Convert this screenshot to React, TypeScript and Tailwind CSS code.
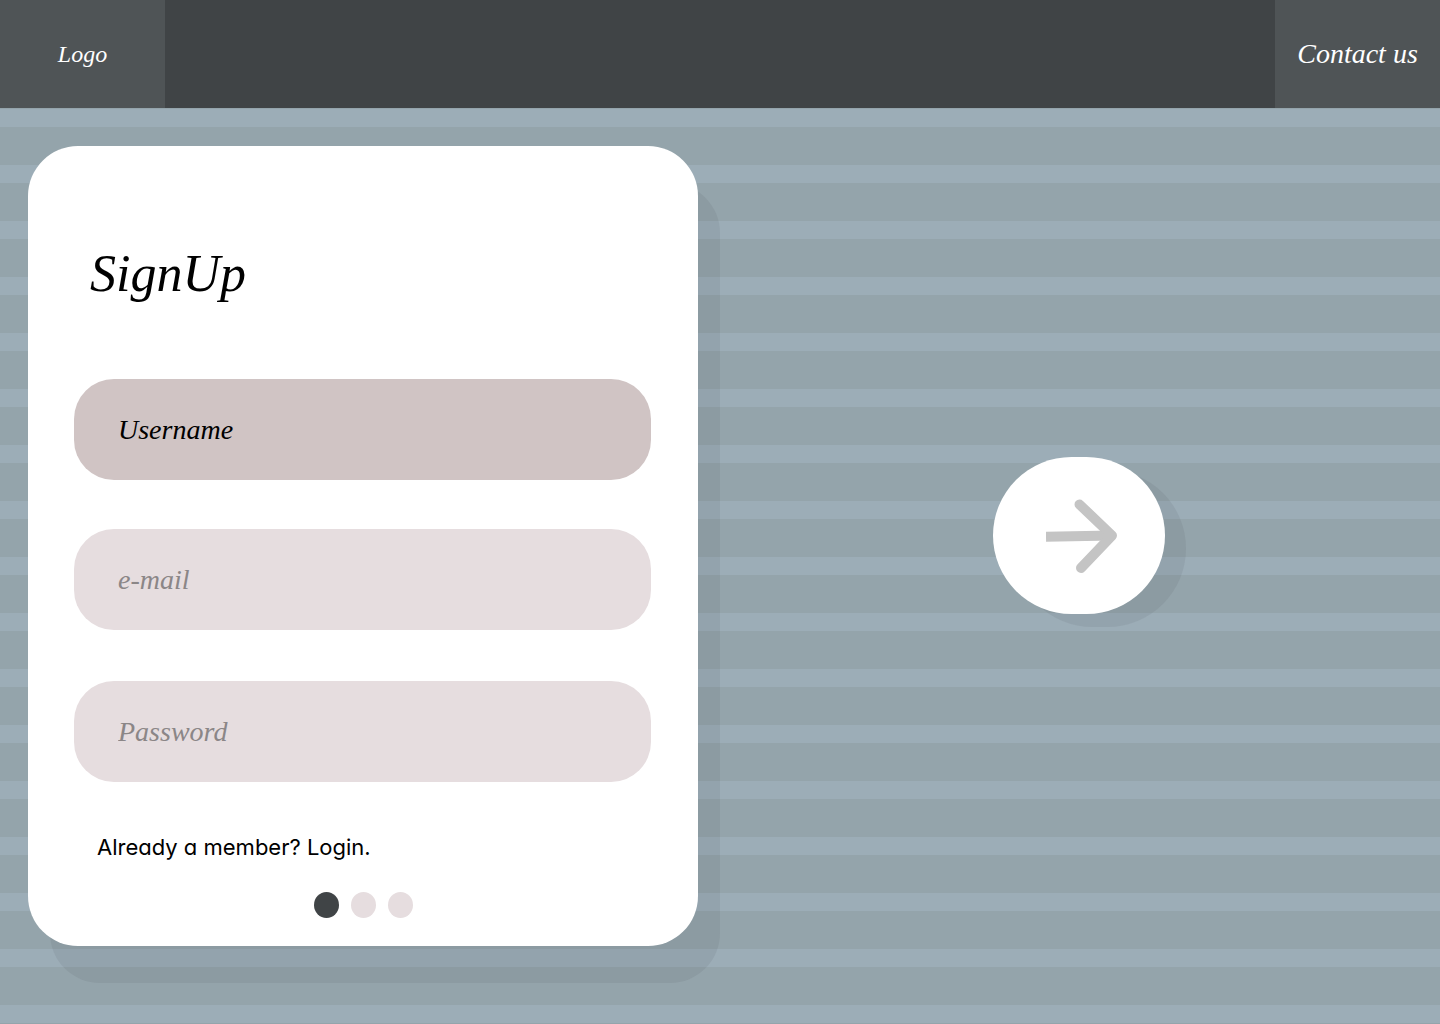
const stripes =
  "bg-[#9cadb7] bg-[repeating-linear-gradient(to_bottom,#9cadb7_0px,#9cadb7_18px,#94a4ab_18px,#94a4ab_56px)] bg-[position:0_1px]";

const script = "font-['Liberation_Serif',serif] italic";

type FieldProps = {
  label: string;
  type: string;
  look: string;
};

function Field({ label, type, look }: FieldProps) {
  return (
    <input
      type={type}
      aria-label={label}
      placeholder={label}
      className={`block h-[101px] w-full rounded-[40px] px-11 text-[28px] outline-none placeholder:opacity-100 ${script} ${look}`}
    />
  );
}

function Arrow() {
  return (
    <svg width="72" height="76" viewBox="0 0 72 76" fill="none" aria-hidden="true">
      <path d="M0 38.8L66 37.4" stroke="#c4c4c4" strokeWidth="10" />
      <path
        d="M33.5 6.5L66 37.5L35 70"
        stroke="#c4c4c4"
        strokeWidth="10"
        strokeLinecap="round"
        strokeLinejoin="round"
      />
    </svg>
  );
}

export default function App() {
  return (
    <div className="flex min-h-screen flex-col">
      <header className={`flex h-[108px] justify-between bg-[#404446] text-white ${script}`}>
        <a href="#home" className="flex w-[165px] items-center justify-center bg-[#4f5456] text-[24px]">
          Logo
        </a>
        <a href="#contact" className="flex w-[165px] items-center justify-center bg-[#4f5456] text-[28px]">
          Contact us
        </a>
      </header>

      <main className={`grid flex-1 grid-cols-2 items-start pt-[38px] pb-[78px] ${stripes}`}>
        <form className="mr-[22px] ml-7 rounded-[50px] bg-white pt-[92px] pr-[47px] pb-7 pl-[46px] shadow-[22px_37px_0_rgba(64,72,76,0.09)]">
          <h1 className={`pl-4 text-[52px] leading-[72px] text-black ${script}`}>SignUp</h1>

          <div className="mt-[69px] mb-[51px]">
            <Field label="Username" type="text" look="mb-[49px] bg-[#d0c4c4] text-black placeholder:text-black" />
            <Field label="e-mail" type="email" look="mb-[51px] bg-[#e6dddf] text-black placeholder:text-[#8b8687]" />
            <Field label="Password" type="password" look="bg-[#e6dddf] text-black placeholder:text-[#8b8687]" />
          </div>

          <p className="-mt-0.5 pl-[23px] font-['Inter',sans-serif] text-[22px] leading-8 text-black [font-feature-settings:'cv11']">
            Already a member? <a href="#login">Login.</a>
          </p>

          <div className="mt-[29px] flex justify-center gap-3 pl-0.5">
            <button type="button" aria-label="Step 1" aria-current="step" className="h-[26px] w-[25px] rounded-[50%] bg-[#404446]" />
            <button type="button" aria-label="Step 2" className="h-[26px] w-[25px] rounded-[50%] bg-[#e6dddf]" />
            <button type="button" aria-label="Step 3" className="h-[26px] w-[25px] rounded-[50%] bg-[#e6dddf]" />
          </div>
        </form>

        <div className="flex items-center justify-center self-stretch pr-0.5 pb-[21px]">
          <button
            type="button"
            aria-label="Next"
            className="flex h-[157px] w-[172px] items-center justify-center rounded-full bg-white pl-1.5 shadow-[21px_13px_0_rgba(64,72,76,0.09)]"
          >
            <Arrow />
          </button>
        </div>
      </main>
    </div>
  );
}
